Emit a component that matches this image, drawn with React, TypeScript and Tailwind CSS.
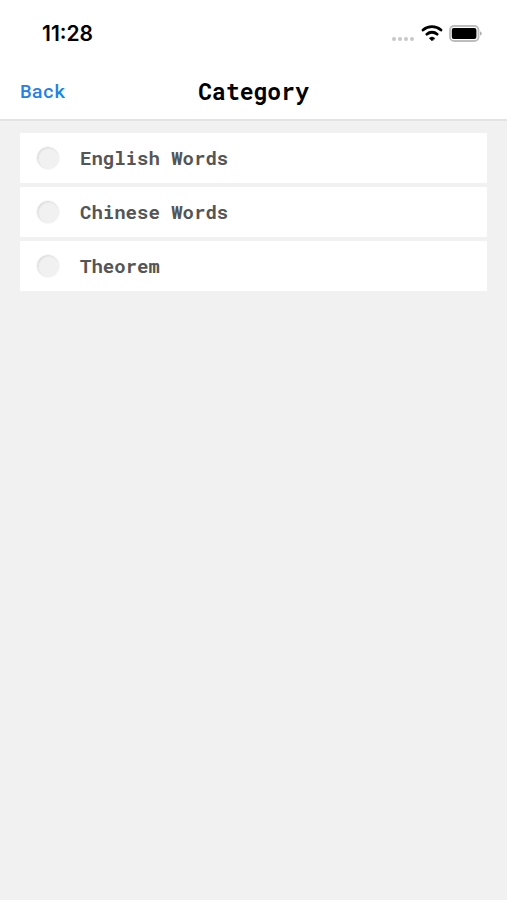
const categories = ["English Words", "Chinese Words", "Theorem"];

function StatusBar() {
  return (
    <div className="flex h-[68px] items-center justify-between pr-[25px] pl-[42px]">
      <time className="font-['Inter',sans-serif] text-[21px] leading-6 font-semibold">11:28</time>
      <div className="flex items-center gap-1.5 pb-0.5">
        <svg width="24" height="22" viewBox="0 0 24 22" fill="#c8c8c8" aria-hidden="true">
          <circle cx="3" cy="17" r="2" />
          <circle cx="9" cy="17" r="2" />
          <circle cx="15" cy="17" r="2" />
          <circle cx="21" cy="17" r="2" />
        </svg>
        <svg width="22" height="16" viewBox="0 0 22 16" fill="none" stroke="#000" strokeLinecap="round" aria-hidden="true">
          <path d="M2 5a13.6 13.6 0 0 1 18 0" strokeWidth="2.8" />
          <path d="M5.8 9.2a7.9 7.9 0 0 1 10.4 0" strokeWidth="2.8" />
          <path d="M11 15.9 8.2 13.2a4.2 4.2 0 0 1 5.6 0Z" fill="#000" stroke="#000" strokeWidth="0.5" />
        </svg>
        <svg width="33" height="17" viewBox="0 0 33 17" fill="none" aria-hidden="true">
          <rect x="1" y="1" width="28.5" height="15" rx="4" stroke="#bdbdbd" strokeWidth="1.8" />
          <rect x="2.8" y="3" width="24.6" height="11" rx="2" fill="#000" />
          <path d="M31 6.2q1.8.8 1.8 2.3T31 10.8Z" fill="#b0b0b0" />
        </svg>
      </div>
    </div>
  );
}

export default function App() {
  return (
    <div className="min-h-screen bg-[#f1f1f1] font-['Roboto_Mono','DejaVu_Sans_Mono',monospace]">
      <header className="border-b-2 border-[#e3e3e3] bg-white text-black">
        <StatusBar />
        <nav className="grid h-[51px] grid-cols-[1fr_auto_1fr] items-center px-5 pb-1.5">
          <button type="button" className="justify-self-start text-[19px] leading-6 font-medium text-[#2380e4]">
            Back
          </button>
          <h1 className="text-[23px] leading-7 font-bold">Category</h1>
        </nav>
      </header>
      <main className="px-5 pt-3">
        <ul className="flex flex-col gap-1">
          {categories.map((name) => (
            <li key={name}>
              <label className="flex h-[50px] items-center gap-5 bg-white pl-4 text-[19px] leading-6 font-bold text-[#555]">
                <input
                  type="radio"
                  name="category"
                  value={name}
                  className="size-6 appearance-none rounded-full border border-[#f8f8f8] bg-[#f1f1f1] shadow-[inset_1px_1px_2px_#d8d8d8] checked:bg-[#2380e4]"
                />
                {name}
              </label>
            </li>
          ))}
        </ul>
      </main>
    </div>
  );
}
